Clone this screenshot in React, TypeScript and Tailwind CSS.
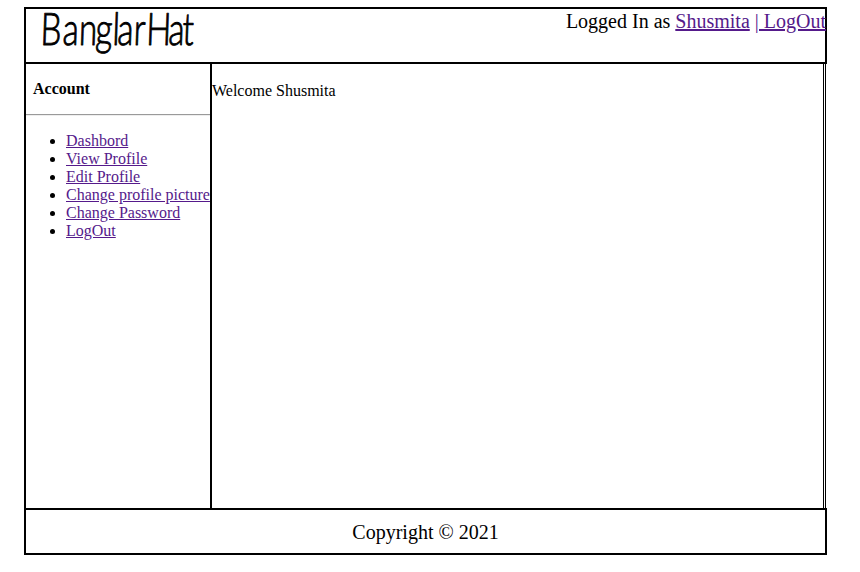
const links = ["Dashbord", "View Profile", "Edit Profile", "Change profile picture", "Change Password", "LogOut"];

export default function App() {
  return (
    <div className="h-[572px] w-[860px] bg-white pl-[24px] pt-[7px] font-['Liberation_Serif','Times_New_Roman',serif] text-[16px] leading-[18px] text-black">
      <header className="flex h-[57px] w-[803px] justify-between border-2 border-black">
        <svg className="overflow-visible" width="180" height="53" viewBox="26 9 180 53" role="img" aria-label="BanglarHat">
          <g transform="translate(0 45) skewX(-2) scale(0.74 1)">
            <text
              x="54 84 106 128.5 151.5 158 180 197 227 246"
              y="0"
              fontFamily="Lato, sans-serif"
              fontSize="45"
              fontWeight="300"
              stroke="#000"
              strokeWidth="0.9"
              strokeLinejoin="round"
            >
              BanglarHat
            </text>
          </g>
        </svg>
        <p className="-mr-px whitespace-pre pt-px text-[20px] leading-[23px]">
          Logged In as <a href="#" className="text-[#551a8b] underline decoration-2">Shusmita</a> <a href="#" className="text-[#551a8b] underline decoration-2">| LogOut</a>
        </p>
      </header>
      <div className="flex h-[444px] w-[802px] border-x border-l-2 border-black">
        <aside className="w-[186px] shrink-0 border-r-2 border-black">
          <h2 className="pl-[7px] pt-[16px] font-bold">Account</h2>
          <hr className="mt-[16px] h-[2px] border-t border-b border-t-[#9a9a9a] border-b-[#eeeeee]" />
          <ul className="mt-[16px] list-disc whitespace-nowrap pl-[40px]">
            {links.map((label) => (
              <li key={label}>
                <a href="#" className="text-[#551a8b] underline">{label}</a>
              </li>
            ))}
          </ul>
        </aside>
        <main className="mr-px grow border-r border-black pt-[18px]">Welcome Shusmita</main>
      </div>
      <footer className="flex h-[47px] w-[803px] justify-center border-2 border-black pt-[11px] text-[20px] leading-[23px]">
        Copyright © 2021
      </footer>
    </div>
  );
}
